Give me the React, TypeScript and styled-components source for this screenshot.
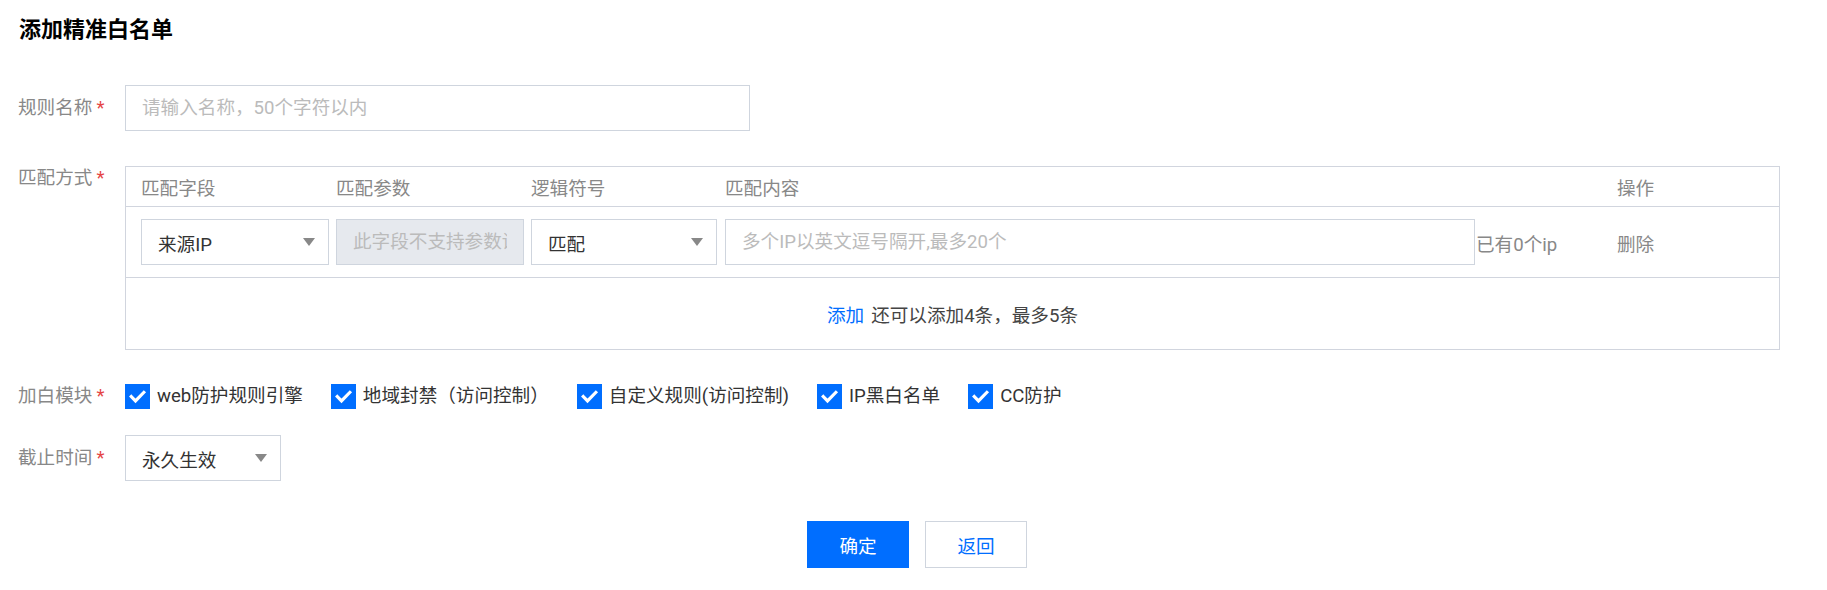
import React from "react";
import styled, { createGlobalStyle } from "styled-components";

const GlobalStyle = createGlobalStyle`
  html, body {
    margin: 0;
    padding: 0;
    background: #fff;
  }
  body {
    font-family: Roboto, "Noto Sans CJK SC", "Noto Sans", sans-serif;
  }
  * {
    box-sizing: border-box;
  }
`;

// text size used by every form part
const fs = "18.6px";

const modules = [
  "web防护规则引擎",
  "地域封禁（访问控制）",
  "自定义规则(访问控制)",
  "IP黑白名单",
  "CC防护",
];

const Caret = () => (
  <svg width="12" height="8" viewBox="0 0 12 8">
    <path d="M0 0 H12 L6 8 Z" fill="#888" />
  </svg>
);

const Check = () => (
  <svg width="25" height="25" viewBox="0 0 25 25">
    <path
      d="M6.3 12.6 L10.5 16.9 L18.8 8.4"
      fill="none"
      stroke="#fff"
      strokeWidth="3.2"
      strokeLinecap="square"
    />
  </svg>
);

const App = () => {
  return (
    <Page>
      <GlobalStyle />
      <Title>添加精准白名单</Title>

      <FormRow>
        <Label>
          规则名称<Required>*</Required>
        </Label>
        <TextInput $w={625} placeholder="请输入名称，50个字符以内" />
      </FormRow>

      <FormRow $mt={35} $top>
        <Label>
          匹配方式<Required>*</Required>
        </Label>
        <Table>
          <TableHead>
            <span>匹配字段</span>
            <span>匹配参数</span>
            <span>逻辑符号</span>
            <span>匹配内容</span>
            <span />
            <span>操作</span>
          </TableHead>
          <TableRow>
            <SelectBox $w={188}>
              来源IP
              <Caret />
            </SelectBox>
            <TextInput $w={188} disabled placeholder="此字段不支持参数设置" />
            <SelectBox $w={186}>
              匹配
              <Caret />
            </SelectBox>
            <TextInput $w={750} placeholder="多个IP以英文逗号隔开,最多20个" />
            <Hint>已有0个ip</Hint>
            <Hint>删除</Hint>
          </TableRow>
          <TableFoot>
            <LinkText>添加</LinkText>
            还可以添加4条，最多5条
          </TableFoot>
        </Table>
      </FormRow>

      <FormRow $mt={34}>
        <Label>
          加白模块<Required>*</Required>
        </Label>
        <CheckList>
          {modules.map((m) => (
            <CheckItem key={m}>
              <CheckBox>
                <Check />
              </CheckBox>
              {m}
            </CheckItem>
          ))}
        </CheckList>
      </FormRow>

      <FormRow $mt={26}>
        <Label>
          截止时间<Required>*</Required>
        </Label>
        <SelectBox $w={156}>
          永久生效
          <Caret />
        </SelectBox>
      </FormRow>

      <ButtonBar>
        <PrimaryButton>确定</PrimaryButton>
        <GhostButton>返回</GhostButton>
      </ButtonBar>
    </Page>
  );
};

export default App;

const Page = styled.div`
  padding: 19px 0 0 18px;
  width: 1827px;
  min-height: 590px;
`;

const Title = styled.h1`
  margin: 0 0 44px 1px;
  font-size: 22px;
  line-height: 22px;
  font-weight: 700;
  color: #000;
`;

const FormRow = styled.div<{ $mt?: number; $top?: boolean }>`
  display: flex;
  align-items: ${(p) => (p.$top ? "flex-start" : "center")};
  margin-top: ${(p) => p.$mt ?? 0}px;
`;

const Label = styled.div`
  width: 107px;
  flex-shrink: 0;
  font-size: ${fs};
  line-height: 25px;
  color: #888;
  white-space: nowrap;
`;

const Required = styled.span`
  color: #e54545;
  margin-left: 4px;
`;

const TextInput = styled.input<{ $w: number }>`
  width: ${(p) => p.$w}px;
  height: 46px;
  padding: 0 16px;
  border: 1px solid #cfd5de;
  border-radius: 0;
  background: #fff;
  font-family: inherit;
  font-size: ${fs};
  color: #333;
  outline: none;

  &::placeholder {
    color: #bbb;
  }
  &:disabled {
    background: #e6e9ee;
  }
`;

const SelectBox = styled.div<{ $w: number }>`
  width: ${(p) => p.$w}px;
  height: 46px;
  padding: 0 13px 0 16px;
  border: 1px solid #cfd5de;
  background: #fff;
  display: flex;
  align-items: center;
  justify-content: space-between;
  font-size: ${fs};
  color: #333;
  cursor: pointer;
`;

const Table = styled.div`
  width: 1655px;
  border: 1px solid #d1d5de;
`;

const columns = "195px 195px 194px 751px 141px 1fr";

const TableHead = styled.div`
  display: grid;
  grid-template-columns: ${columns};
  align-items: center;
  height: 40px;
  padding-left: 15px;
  border-bottom: 1px solid #d1d5de;
  font-size: ${fs};
  color: #888;
`;

const TableRow = styled.div`
  display: grid;
  grid-template-columns: ${columns};
  align-items: center;
  height: 71px;
  padding-left: 15px;
  border-bottom: 1px solid #d1d5de;
`;

const Hint = styled.span`
  font-size: ${fs};
  color: #888;
`;

const TableFoot = styled.div`
  height: 71px;
  display: flex;
  align-items: center;
  justify-content: center;
  font-size: ${fs};
  color: #444;
`;

const LinkText = styled.a`
  color: #006eff;
  margin-right: 7px;
  cursor: pointer;
`;

const CheckList = styled.div`
  display: flex;
  align-items: center;
`;

const CheckItem = styled.label`
  display: flex;
  align-items: center;
  margin-right: 28px;
  font-size: ${fs};
  line-height: 25px;
  color: #333;
  white-space: nowrap;
`;

const CheckBox = styled.span`
  width: 25px;
  height: 25px;
  margin-right: 7px;
  background: #006eff;
  display: flex;
  align-items: center;
  justify-content: center;
`;

const ButtonBar = styled.div`
  display: flex;
  justify-content: center;
  gap: 16px;
  margin-top: 40px;
  padding-right: 11px;
`;

const PrimaryButton = styled.button`
  width: 102px;
  height: 47px;
  border: 1px solid #006eff;
  background: #006eff;
  color: #fff;
  font-family: inherit;
  font-size: ${fs};
  cursor: pointer;
`;

const GhostButton = styled.button`
  width: 102px;
  height: 47px;
  border: 1px solid #cfd5de;
  background: #fff;
  color: #006eff;
  font-family: inherit;
  font-size: ${fs};
  cursor: pointer;
`;
